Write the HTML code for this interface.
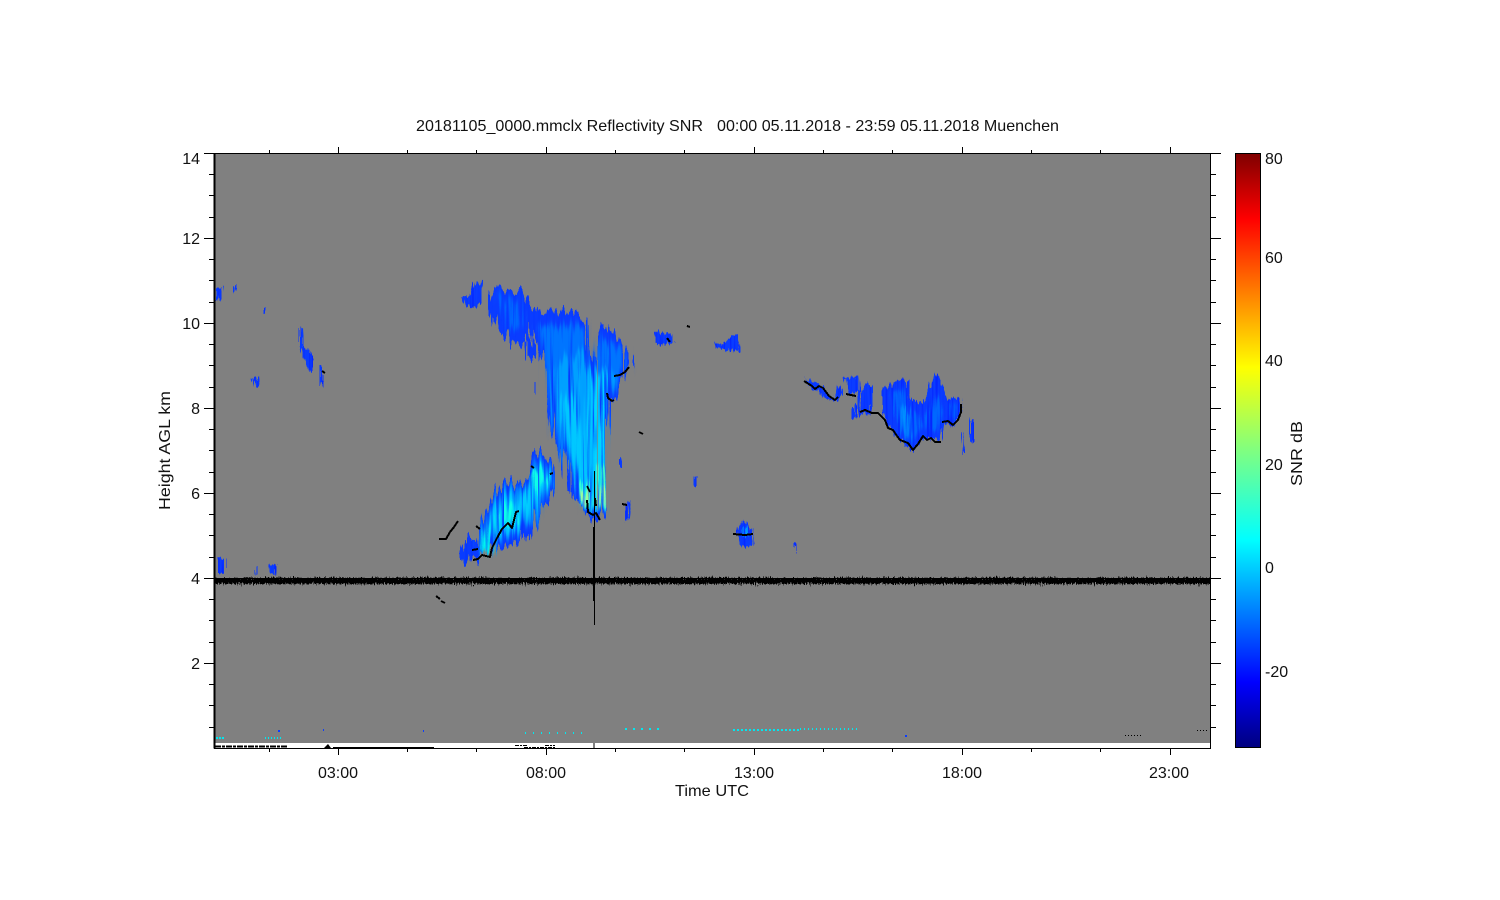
<!DOCTYPE html>
<html><head><meta charset="utf-8"><title>20181105_0000.mmclx Reflectivity SNR</title>
<style>html,body{margin:0;padding:0;background:#fff;width:1500px;height:900px;overflow:hidden}svg{display:block}text{font-family:"Liberation Sans",sans-serif;font-size:16px;fill:#111;white-space:pre}</style></head>
<body>
<svg width="1500" height="900" viewBox="0 0 1500 900" xmlns="http://www.w3.org/2000/svg">
<defs>
<linearGradient id="jet" x1="0" y1="0" x2="0" y2="1">
<stop offset="0" stop-color="#7f0000"/><stop offset=".11" stop-color="#ff0000"/><stop offset=".36" stop-color="#ffff00"/><stop offset=".5" stop-color="#80ff80"/><stop offset=".65" stop-color="#00ffff"/><stop offset=".89" stop-color="#0000ff"/><stop offset="1" stop-color="#00007f"/>
</linearGradient>
<filter id="jag" filterUnits="userSpaceOnUse" x="200" y="150" width="1020" height="600" color-interpolation-filters="sRGB">
<feTurbulence type="fractalNoise" baseFrequency="0.3 0.012" numOctaves="2" seed="7" result="n"/>
<feDisplacementMap in="SourceGraphic" in2="n" scale="24" xChannelSelector="A" yChannelSelector="G" result="d"/>
<feTurbulence type="fractalNoise" baseFrequency="0.42 0.012" numOctaves="2" seed="21" result="s"/>
<feColorMatrix in="s" type="matrix" values="0 0 0 0 0.02  0 0 0 0 0.22  0 0 0 0 1  4 0 0 0 -2.1" result="dark"/>
<feComposite in="dark" in2="d" operator="in" result="dk"/>
<feMerge><feMergeNode in="d"/><feMergeNode in="dk"/></feMerge>
</filter>
<filter id="jag2" filterUnits="userSpaceOnUse" x="200" y="150" width="1020" height="600" color-interpolation-filters="sRGB">
<feTurbulence type="fractalNoise" baseFrequency="0.45 0.03" numOctaves="2" seed="3" result="n"/>
<feDisplacementMap in="SourceGraphic" in2="n" scale="11" xChannelSelector="A" yChannelSelector="G" result="d"/>
<feTurbulence type="fractalNoise" baseFrequency="0.5 0.015" numOctaves="2" seed="14" result="s"/>
<feColorMatrix in="s" type="matrix" values="0 0 0 0 0.02  0 0 0 0 0.15  0 0 0 0 1  4 0 0 0 -1.9" result="dark"/>
<feComposite in="dark" in2="d" operator="in" result="dk"/>
<feMerge><feMergeNode in="d"/><feMergeNode in="dk"/></feMerge>
</filter>
<filter id="noise" filterUnits="userSpaceOnUse" x="210" y="565" width="1005" height="30" color-interpolation-filters="sRGB">
<feTurbulence type="fractalNoise" baseFrequency="0.9 0.2" numOctaves="2" seed="11" result="n"/>
<feDisplacementMap in="SourceGraphic" in2="n" scale="7" xChannelSelector="A" yChannelSelector="G"/>
</filter>
<filter id="b2"><feGaussianBlur stdDeviation="1.6"/></filter>
<filter id="b4"><feGaussianBlur stdDeviation="3"/></filter>
<clipPath id="plot"><rect x="215" y="154" width="995" height="594"/></clipPath>
</defs>

<rect x="214" y="153" width="996" height="595" fill="#808080"/>
<rect x="215" y="743" width="995" height="5" fill="#fff"/>

<g clip-path="url(#plot)">
<!-- main anvil cloud -->
<g filter="url(#jag)">
<polygon fill="#0a3cff" points="497,291 522,288 528,302 540,310 558,311 573,313 587,322 588,360 598,360 598,332 603,323 625,347 630,363 627,373 610,400 607,437 605,510 600,517 587,517 577,500 567,490 565,460 553,437 548,410 550,377 537,350 530,328 522,350 512,340 497,330 490,307"/>
<polygon fill="#0a3cff" points="526,335 534,345 535,362 528,358"/>
<g filter="url(#b4)">
<polygon fill="#0068ff" points="500,298 518,296 522,325 510,330"/>
<polygon fill="#0074ff" points="538,325 585,326 586,375 596,375 600,336 622,350 625,368 606,395 604,508 586,512 570,470 554,430 550,380"/>
<polygon fill="#00a0ff" points="556,365 582,350 588,372 600,372 614,370 603,400 601,508 584,508 568,455 556,420"/>
<polygon fill="#00c8ff" points="562,400 575,395 590,470 592,507 583,507 568,450"/>
<polygon fill="#00d8ff" points="589,372 603,372 603,507 594,507 589,430"/>
</g>
<g filter="url(#b2)">
<polygon fill="#30ffd8" points="577,478 586,482 591,509 583,509"/>
<polygon fill="#40ffc8" points="597,466 604,468 603,507 597,507"/>
<polygon fill="#b0ff80" points="581,490 586,494 588,505 584,505"/>
<polygon fill="#b0ff80" points="599,486 603,488 602,503 599,503"/>
</g>
</g>
<rect x="597" y="360" width="1" height="150" fill="#808080" opacity=".7"/>
<!-- small fragments -->
<g filter="url(#jag2)">
<polygon fill="#0a3cff" points="462,296 470,296 474,284 482,280 481,303 472,308 463,303"/>
<polygon fill="#0a3cff" points="215,288 222,286 221,298 215,302"/>
<polygon fill="#0a3cff" points="233,286 237,286 237,293 234,292"/>
<polygon fill="#0a3cff" points="300,327 302,327 303,345 313,358 313,372 310,372 302,355 300,345"/>
<polygon fill="#0a3cff" points="320,365 322,365 322,385 320,385"/>
<polygon fill="#0a3cff" points="253,378 260,378 261,386 255,386"/>
<polygon fill="#0a3cff" points="265,308 267,308 267,314 265,314"/>
<polygon fill="#0a3cff" points="654,332 672,334 674,342 662,345 655,342"/>
<polygon fill="#0a3cff" points="714,342 722,346 733,336 738,334 740,350 728,352 716,348"/>
<polygon fill="#0a3cff" points="218,558 224,558 224,574 219,574"/>
<polygon fill="#0a3cff" points="256,566 258,566 258,576 256,576"/>
<polygon fill="#0a3cff" points="268,566 277,564 276,574 270,574"/>
<polygon fill="#0a3cff" points="694,478 699,476 699,487 694,487"/>
<polygon fill="#0a3cff" points="795,544 797,544 797,550 795,550"/>
<polygon fill="#0a3cff" points="620,459 622,459 622,468 620,468"/>
<polygon fill="#0a3cff" points="625,507 630,500 628,520 625,525"/>
<polygon fill="#0a3cff" points="961,432 963,432 964,455 962,455"/>
<polygon fill="#0a3cff" points="971,420 973,420 973,442 971,442"/>
<polygon fill="#0a3cff" points="533,382 536,382 536,395 533,395"/>
<polygon fill="#0a3cff" points="803,377 810,380 820,385 827,392 830,398 835,400 838,385 843,390 838,402 825,398 810,387"/>
<polygon fill="#0a3cff" points="843,378 858,376 860,392 848,394"/>
<polygon fill="#0a3cff" points="737,530 745,520 752,530 754,545 750,548 738,545"/>
<polygon fill="#0098ff" points="742,530 746,525 749,536 743,538"/>
</g>
<!-- lower cloud -->
<g filter="url(#jag)">
<polygon fill="#0a3cff" points="468,565 462,553 468,541 475,539 480,543 486,512 494,496 506,481 520,486 530,475 536,450 553,464 557,480 549,500 540,509 528,542 520,532 507,548 497,542 483,556 477,559"/>
<g filter="url(#b4)">
<polygon fill="#0090ff" points="482,548 489,515 498,498 508,487 522,491 532,480 538,458 550,468 553,482 542,502 531,525 522,524 506,540 494,536"/>
<polygon fill="#00ccff" points="481,552 492,515 506,494 516,504 526,492 535,470 547,472 549,488 534,503 524,518 508,533 494,532"/>
</g>
<g filter="url(#b2)">
<polygon fill="#00f4f0" points="481,556 489,525 495,520 491,552"/>
<polygon fill="#10ffe8" points="499,512 511,503 514,520 503,526"/>
<polygon fill="#10ffe8" points="532,474 541,468 548,480 537,493"/>
</g>
</g>
<!-- right cloud -->
<g filter="url(#jag2)">
<polygon fill="#0a3cff" points="882,390 895,382 908,380 910,400 923,403 935,373 943,382 947,400 960,397 962,412 953,427 943,422 940,441 925,437 913,452 900,440 887,423 882,413"/>
<g filter="url(#b2)">
<polygon fill="#0068ff" points="893,392 905,390 908,415 918,412 922,425 912,445 902,432 895,415"/>
<polygon fill="#0090ff" points="900,405 908,408 912,440 906,435"/>
<polygon fill="#0068ff" points="925,415 938,395 942,410 936,432 928,430"/>
<polygon fill="#0060ff" points="950,405 958,402 958,415 952,420"/>
</g>
<polygon fill="#0a3cff" points="858,392 862,390 866,385 872,388 872,414 866,414 860,415"/>
<polygon fill="#0a3cff" points="853,405 857,405 857,418 853,418"/>
</g>

<!-- black contours -->
<g fill="none" stroke="#000" stroke-width="2" stroke-linejoin="round" shape-rendering="crispEdges">
<polyline points="439,539 446,539 450,532 454,527 458,521"/>
<polyline points="473,560 478,559 482,555 490,557 492,548 497,538 502,529 508,523 512,528 516,512 519,511"/>
<polyline points="472,550 478,549"/>
<polyline points="476,526 480,529"/>
<polyline points="531,466 534,468"/>
<polyline points="550,474 553,473"/>
<polyline points="587,500 588,512 593,515 596,513 600,520"/>
<polyline points="587,486 590,492"/>
<polyline points="595,498 596,506"/>
<polyline points="614,376 620,375 625,372 629,367"/>
<polyline points="607,393 608,398 612,401 614,400"/>
<polyline points="804,381 812,386 815,389 819,386 823,388 829,396 835,400 838,397"/>
<polyline points="846,394 856,396"/>
<polyline points="860,412 865,410 872,413 878,413 885,420 888,428 893,430 897,436 900,440 908,443 913,450 918,444 923,436 927,440 931,438 935,442 941,442"/>
<polyline points="942,422 948,421 953,425 958,420 961,412 961,404"/>
<polyline points="733,534 745,535 753,534"/>
<polyline points="687,326 690,327"/>
<polyline points="667,338 670,342"/>
<polyline points="436,596 440,599"/>
<polyline points="441,601 445,603"/>
<polyline points="322,371 325,373"/>
<polyline points="639,432 643,434"/>
<polyline points="622,504 627,505"/>
</g>

<!-- noisy band -->
<g filter="url(#noise)">
<rect x="208" y="578" width="1010" height="6" fill="#000"/>
</g>
<rect x="208" y="578" width="1010" height="1" fill="#000"/>
<rect x="593" y="527" width="2" height="74" fill="#000"/>
<rect x="594" y="471" width="1" height="154" fill="#000"/>

<!-- ground clutter -->
<g fill="none" stroke="#00e8f0" stroke-width="2">
<path stroke-dasharray="2 1" d="M216 738H225"/>
<path stroke-dasharray="1 2" d="M265 738H282"/>
<path stroke-dasharray="1 7" d="M525 733H585"/>
<path stroke-dasharray="2 6" d="M625 729H665"/>
<path stroke-dasharray="2 2" d="M733 730H800"/>
<path stroke-dasharray="1 3" d="M800 729H860"/>
</g>
<g fill="#0a3cff"><rect x="278" y="730" width="2" height="2"/><rect x="423" y="730" width="1" height="2"/><rect x="323" y="729" width="1" height="2"/><rect x="905" y="735" width="2" height="2"/></g>
<g fill="none" stroke="#000">
<path stroke-width="2" stroke-dasharray="6 1 3 1" d="M215 746.5H288"/>
<path stroke-width="1" d="M333 747.5H434"/>
<path stroke-width="1" stroke-dasharray="4 1 2 1" d="M515 745.5H527M524 747.5H556M545 745.5H555"/>
<path stroke-width="1" stroke-dasharray="1 2" d="M1125 735.5H1141M1197 730.5H1209"/>
</g>
<polygon points="324,748 328,744 331,748" fill="#000"/>
<rect x="593" y="741" width="2" height="7" fill="#808080"/>
</g>

<!-- axes and ticks -->
<g fill="none" stroke="#000" stroke-width="1" shape-rendering="crispEdges">
<path stroke-width="2" d="M214.5 153V748.5"/>
<path stroke-width="1" d="M214 153.5H1211M214 748.5H1211M1210.5 153V749"/>
<path d="M204 153.5H214M204 238.5H214M204 323.5H214M204 408.5H214M204 493.5H214M204 578.5H214M204 663.5H214M1210 153.5H1221M1210 238.5H1221M1210 323.5H1221M1210 408.5H1221M1210 493.5H1221M1210 578.5H1221M1210 663.5H1221"/>
<path d="M209 174.5H214M209 195.5H214M209 217.5H214M209 259.5H214M209 280.5H214M209 302.5H214M209 344.5H214M209 365.5H214M209 387.5H214M209 429.5H214M209 450.5H214M209 472.5H214M209 514.5H214M209 535.5H214M209 557.5H214M209 599.5H214M209 620.5H214M209 642.5H214M209 684.5H214M209 705.5H214M209 727.5H214"/>
<path d="M1211 174.5H1216M1211 195.5H1216M1211 217.5H1216M1211 259.5H1216M1211 280.5H1216M1211 302.5H1216M1211 344.5H1216M1211 365.5H1216M1211 387.5H1216M1211 429.5H1216M1211 450.5H1216M1211 472.5H1216M1211 514.5H1216M1211 535.5H1216M1211 557.5H1216M1211 599.5H1216M1211 620.5H1216M1211 642.5H1216M1211 684.5H1216M1211 705.5H1216M1211 727.5H1216"/>
<path d="M338.5 147V153M546.5 147V153M754.5 147V153M962.5 147V153M1170.5 147V153M338.5 749V755M546.5 749V755M754.5 749V755M962.5 749V755M1170.5 749V755"/>
<path d="M269.5 150V153M407.5 150V153M476.5 150V153M615.5 150V153M684.5 150V153M823.5 150V153M892.5 150V153M1031.5 150V153M1100.5 150V153M269.5 749V752M407.5 749V752M476.5 749V752M615.5 749V752M684.5 749V752M823.5 749V752M892.5 749V752M1031.5 749V752M1100.5 749V752"/>
</g>

<!-- colorbar -->
<rect x="1235.5" y="153.5" width="25" height="594" fill="url(#jet)" stroke="#000" stroke-width="1" shape-rendering="crispEdges"/>

<!-- text -->
<text x="416" y="131" textLength="287" lengthAdjust="spacingAndGlyphs">20181105_0000.mmclx Reflectivity SNR</text>
<text x="717" y="131" textLength="342" lengthAdjust="spacingAndGlyphs">00:00 05.11.2018 - 23:59 05.11.2018 Muenchen</text>
<g text-anchor="end">
<text x="200" y="164">14</text><text x="200" y="244">12</text><text x="200" y="329">10</text><text x="200" y="414">8</text><text x="200" y="499">6</text><text x="200" y="584">4</text><text x="200" y="669">2</text>
</g>
<g text-anchor="middle">
<text x="338" y="778">03:00</text><text x="546" y="778">08:00</text><text x="754" y="778">13:00</text><text x="962" y="778">18:00</text><text x="1169" y="778">23:00</text>
<text x="712" y="796" textLength="74" lengthAdjust="spacingAndGlyphs">Time UTC</text>
</g>
<g>
<text x="1265" y="164">80</text><text x="1265" y="263">60</text><text x="1265" y="366">40</text><text x="1265" y="470">20</text><text x="1265" y="573">0</text><text x="1265" y="677">-20</text>
</g>
<text transform="translate(170,510) rotate(-90)" textLength="119" lengthAdjust="spacingAndGlyphs">Height AGL km</text>
<text transform="translate(1302,486) rotate(-90)" textLength="65" lengthAdjust="spacingAndGlyphs">SNR dB</text>
</svg>
</body></html>
